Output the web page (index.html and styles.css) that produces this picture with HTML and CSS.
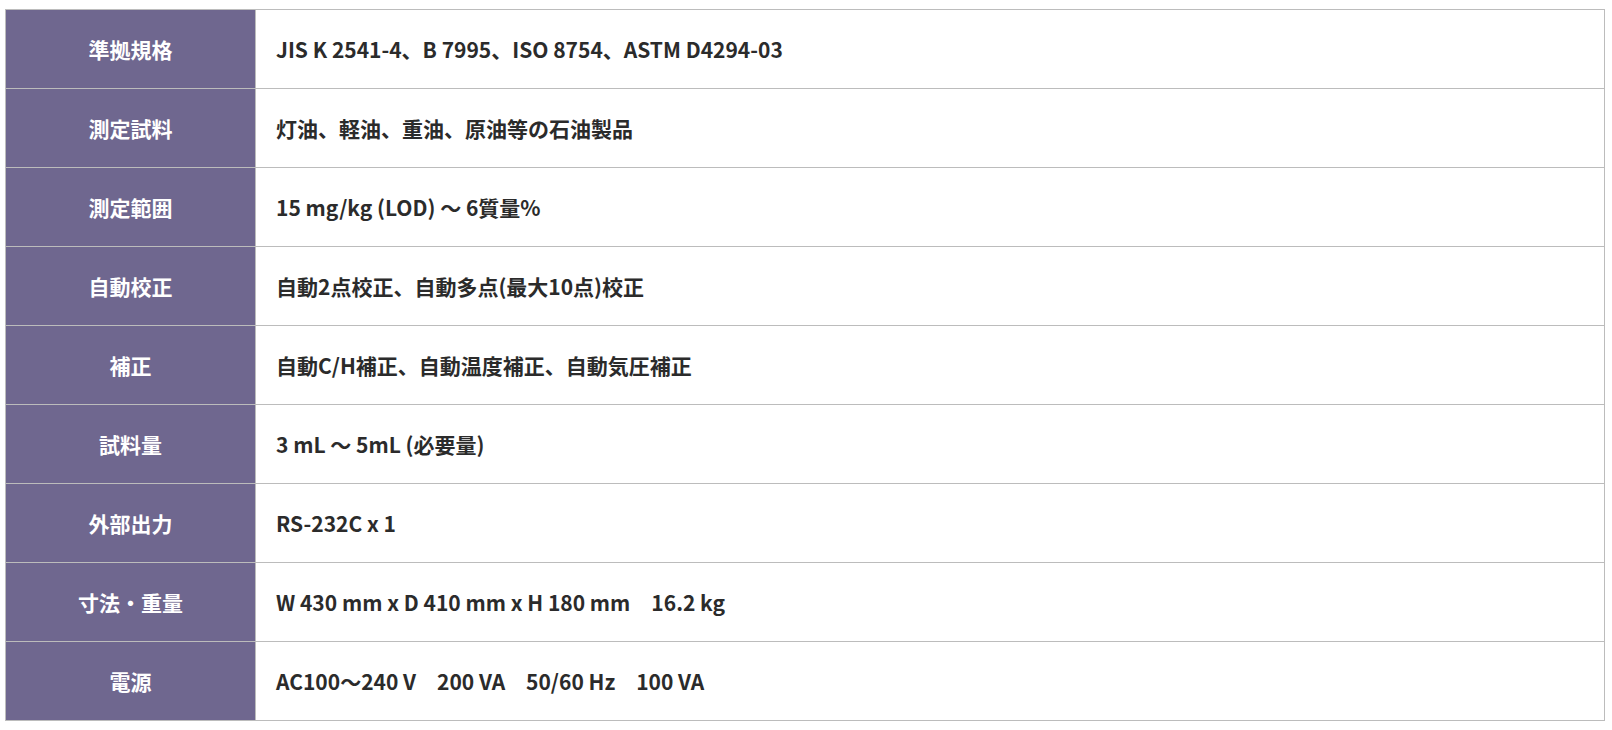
FILE: index.html
```html
<!DOCTYPE html>
<html lang="ja">
<head>
<meta charset="utf-8">
<link rel="stylesheet" href="styles.css">
</head>
<body>
<div class="wrap">
<table class="spec">
<tbody>
<tr><th>準拠規格</th><td>JIS K 2541-4、B 7995、ISO 8754、ASTM D4294-03</td></tr>
<tr><th>測定試料</th><td>灯油、軽油、重油、原油等の石油製品</td></tr>
<tr><th>測定範囲</th><td>15 mg/kg (LOD) ～ 6質量%</td></tr>
<tr><th>自動校正</th><td>自動2点校正、自動多点(最大10点)校正</td></tr>
<tr><th>補正</th><td>自動C/H補正、自動温度補正、自動気圧補正</td></tr>
<tr><th>試料量</th><td>3 mL ～ 5mL (必要量)</td></tr>
<tr><th>外部出力</th><td>RS-232C x 1</td></tr>
<tr><th>寸法・重量</th><td>W 430 mm x D 410 mm x H 180 mm　16.2 kg</td></tr>
<tr><th>電源</th><td>AC100～240 V　200 VA　50/60 Hz　100 VA</td></tr>
</tbody>
</table>
</div>
</body>
</html>
```
FILE: styles.css
```css
html, body {
  margin: 0;
  padding: 0;
  background: #fff;
}
.wrap {
  padding: 9px 7px 0 5px;
}
.spec {
  width: 100%;
  border-collapse: collapse;
  border: 1px solid #bcbcbc;
  font-family: "Noto Sans CJK JP", "Noto Sans", sans-serif;
  font-weight: 700;
  font-size: 21px;
}
.spec th,
.spec td {
  border: 1px solid #bcbcbc;
  height: 79px;
  padding: 0;
  vertical-align: middle;
  box-sizing: border-box;
}
.spec th {
  width: 250px;
  background: #6f678f;
  color: #fff;
  text-align: center;
}
.spec td {
  color: #2b2b2b;
  text-align: left;
  padding-left: 20px;
}
```
